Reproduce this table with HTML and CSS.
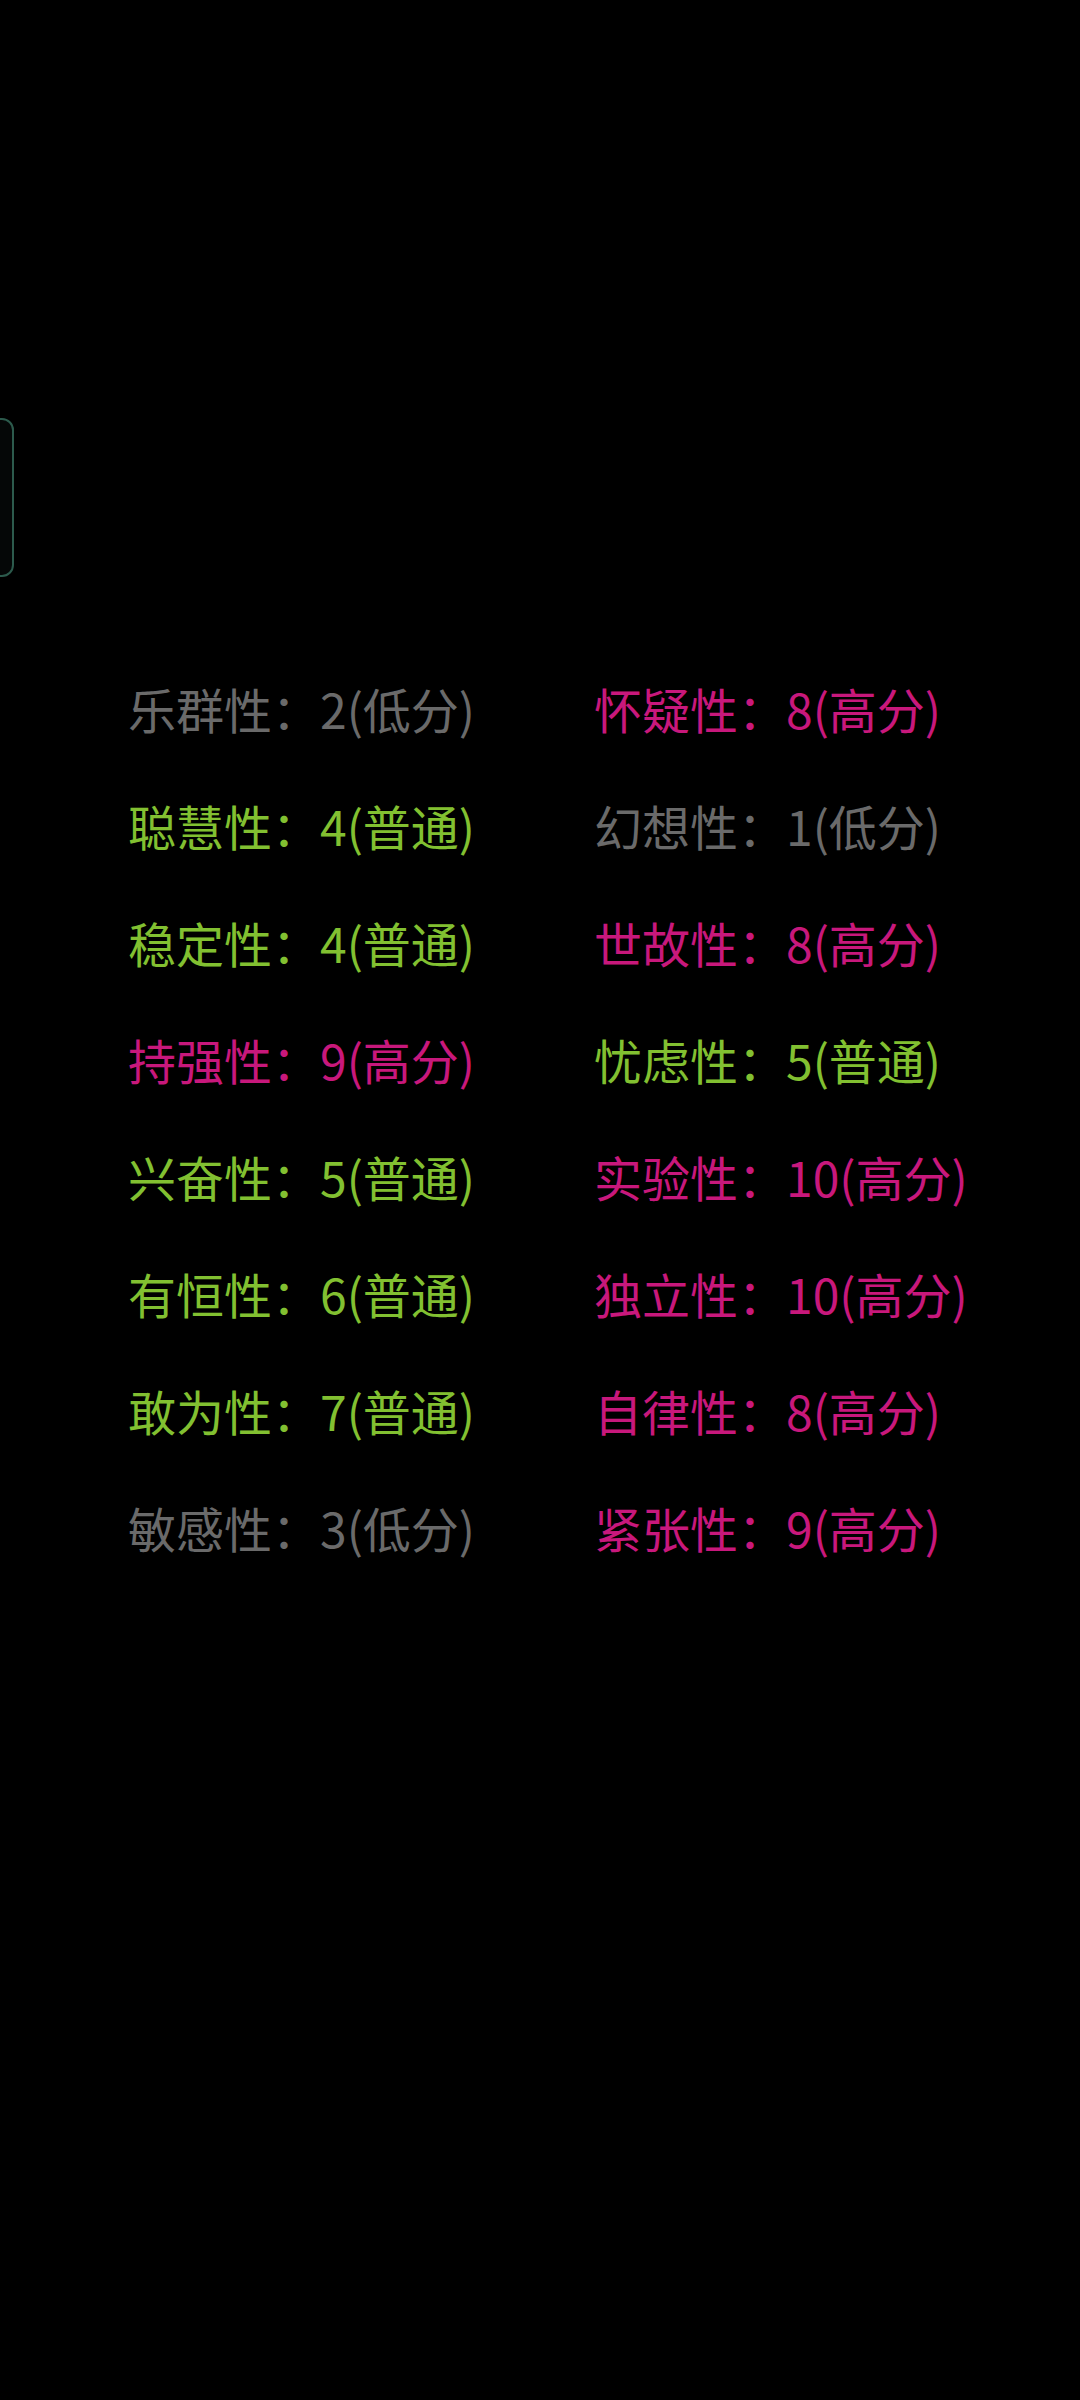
FILE: index.html
```html
<!DOCTYPE html>
<html lang="zh-CN">
<head>
<meta charset="utf-8">
<link rel="stylesheet" href="styles.css">
</head>
<body>
<div class="handle"></div>
<div class="grid">
  <div class="item low">乐群性：2(低分)</div>
  <div class="item high">怀疑性：8(高分)</div>
  <div class="item mid">聪慧性：4(普通)</div>
  <div class="item low">幻想性：1(低分)</div>
  <div class="item mid">稳定性：4(普通)</div>
  <div class="item high">世故性：8(高分)</div>
  <div class="item high">持强性：9(高分)</div>
  <div class="item mid">忧虑性：5(普通)</div>
  <div class="item mid">兴奋性：5(普通)</div>
  <div class="item high">实验性：10(高分)</div>
  <div class="item mid">有恒性：6(普通)</div>
  <div class="item high">独立性：10(高分)</div>
  <div class="item mid">敢为性：7(普通)</div>
  <div class="item high">自律性：8(高分)</div>
  <div class="item low">敏感性：3(低分)</div>
  <div class="item high">紧张性：9(高分)</div>
</div>
</body>
</html>
```
FILE: styles.css
```css
html, body {
  margin: 0;
  padding: 0;
  background: #000;
  width: 1080px;
  height: 2400px;
  overflow: hidden;
}
body {
  position: relative;
  font-family: "Noto Sans CJK SC", "Noto Sans", sans-serif;
}
.handle {
  position: absolute;
  left: -22px;
  top: 418px;
  width: 32px;
  height: 155px;
  border: 2px solid #2c5a4c;
  border-radius: 12px;
  background: #050707;
}
.grid {
  display: grid;
  grid-template-columns: 466px auto;
  padding-top: 650px;
  padding-left: 128px;
}
.item {
  font-size: 48px;
  line-height: 117px;
  height: 117px;
  white-space: nowrap;
}
.low { color: #6a6a6a; }
.mid { color: #82c031; }
.high { color: #c8187c; }
```
